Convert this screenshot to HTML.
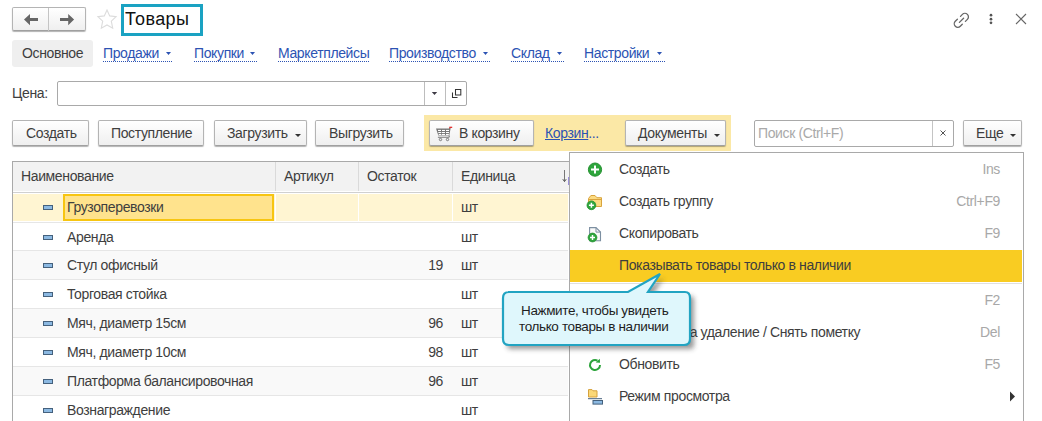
<!DOCTYPE html>
<html><head><meta charset="utf-8">
<style>
*{box-sizing:border-box;margin:0;padding:0}
html,body{width:1042px;height:421px;overflow:hidden;background:#fff}
body{position:relative;font-family:"Liberation Sans",sans-serif;font-size:14px;letter-spacing:-0.37px;color:#3e3e3e}
.a{position:absolute}
.t{position:absolute;white-space:nowrap;line-height:16px}
.btn{position:absolute;height:26px;border:1px solid #b4b4b4;border-bottom-color:#a0a0a0;border-radius:2px;background:linear-gradient(#fff,#efefef);box-shadow:0 1px 1px rgba(0,0,0,.3)}
.btn span{position:absolute;top:4px;white-space:nowrap;line-height:16px}
.lnk{color:#2c53b3}
.dot{background-image:linear-gradient(to right,#2c53b3 50%,transparent 50%);background-size:2px 1px;background-repeat:repeat-x;background-position:0 16px;padding-bottom:1px}
.row{position:absolute;left:13px;width:555px;height:29px;border-bottom:1px solid #e6e6e6}
.row .ic{position:absolute;left:30px;top:12px;width:10px;height:5px;background:#8cb9e2;border:1px solid #45617d}
.row .nm{position:absolute;left:54px;top:6px;white-space:nowrap;line-height:16px}
.row .qt{position:absolute;right:125px;top:6px;line-height:16px}
.row .un{position:absolute;left:448px;top:6px;line-height:16px}
.mi{position:absolute;left:570px;width:452px;height:32px}
.mi .l{position:absolute;left:49px;top:8px;white-space:nowrap;line-height:16px}
.mi .r{position:absolute;right:22px;top:8px;white-space:nowrap;line-height:16px;color:#a8a8a8}
</style></head><body>

<!-- back / forward -->
<div class="btn" style="left:12px;top:7px;width:74px;height:24px"></div>
<div class="a" style="left:48px;top:8px;width:1px;height:23px;background:#c4c4c4"></div>
<svg class="a" style="left:22px;top:12px" width="18" height="14" viewBox="0 0 18 14"><path d="M2 7.4L8 2v4.1h8v2.8H8v4.4z" fill="#666"/></svg>
<svg class="a" style="left:58px;top:12px" width="18" height="14" viewBox="0 0 18 14"><path d="M16.1 7.4L10.2 2v4.1H2v2.8h8.2v4.4z" fill="#666"/></svg>
<!-- star -->
<svg class="a" style="left:96px;top:9px" width="22" height="21" viewBox="0 0 22 21"><path d="M11 1l2.7 5.9 6.4.8-4.8 4.5 1.4 7L11 15.9l-5.7 3.3 1.4-7L1.9 7.7l6.4-.8z" fill="none" stroke="#dcdcdc" stroke-width="1.1"/></svg>
<!-- title -->
<div class="a" style="left:121px;top:4px;width:82px;height:32px;border:3px solid #1aa2c2"></div>
<div class="t" style="left:125px;top:9px;font-size:18px;letter-spacing:0.4px;line-height:20px;color:#111">Товары</div>

<!-- top right icons -->
<svg class="a" style="left:949px;top:9px" width="25" height="23" viewBox="0 0 25 23"><g fill="none" stroke="#666" stroke-width="1.3" stroke-linecap="round"><path d="M11.5 7.4L13.4 5.4A3.5 3.5 0 0 1 18.4 10.4L16.4 12.4"/><path d="M8.4 10.2L6.3 12.2A3.5 3.5 0 0 0 11.3 17.2L13.3 15.2"/><path d="M10.4 13.4L14.6 9.2"/></g></svg>
<svg class="a" style="left:986px;top:10px" width="10" height="18" viewBox="0 0 10 18"><g fill="#555"><circle cx="5" cy="5.2" r="1.35"/><circle cx="5" cy="9.2" r="1.35"/><circle cx="5" cy="12.8" r="1.35"/></g></svg>
<svg class="a" style="left:1014px;top:12px" width="14" height="14" viewBox="0 0 14 14"><path d="M2 2l10 10M12 2L2 12" stroke="#666" stroke-width="1.1"/></svg>

<!-- nav -->
<div class="a" style="left:12px;top:40px;width:81px;height:27px;background:#efefef;border-radius:3px"></div>
<div class="t" style="left:22px;top:45px">Основное</div>
<div class="t lnk dot" style="left:103px;top:45px;width:70px">Продажи</div>
<div class="t lnk dot" style="left:194px;top:45px;width:64px">Покупки</div>
<div class="t lnk dot" style="left:278px;top:45px;width:92px">Маркетплейсы</div>
<div class="t lnk dot" style="left:389px;top:45px;width:102px">Производство</div>
<div class="t lnk dot" style="left:511px;top:45px;width:53px">Склад</div>
<div class="t lnk dot" style="left:584px;top:45px;width:81px">Настройки</div>
<svg class="a" style="left:0;top:0" width="700" height="70"><g fill="#2c53b3"><path d="M166 52h5l-2.5 3z"/><path d="M250 52h5l-2.5 3z"/><path d="M483 52h5l-2.5 3z"/><path d="M557 52h5l-2.5 3z"/><path d="M657 52h5l-2.5 3z"/></g></svg>

<!-- price -->
<div class="t" style="left:12px;top:85px">Цена:</div>
<div class="a" style="left:57px;top:81px;width:410px;height:25px;border:1px solid #a9a9a9;border-radius:2px"></div>
<div class="a" style="left:424px;top:82px;width:1px;height:23px;background:#bdbdbd"></div>
<div class="a" style="left:445px;top:82px;width:1px;height:23px;background:#bdbdbd"></div>
<svg class="a" style="left:430px;top:90px" width="10" height="8"><path d="M1.8 2h5.4L4.5 5z" fill="#3d3a44"/></svg>
<svg class="a" style="left:451px;top:88px" width="12" height="12" viewBox="0 0 12 12"><path d="M4.5 1.5h5.3v5.5H4.5z M1.5 4.5v5h5" fill="none" stroke="#333" stroke-width="1.05"/></svg>

<!-- toolbar -->
<div class="btn" style="left:12px;top:120px;width:77px"><span style="left:13px">Создать</span></div>
<div class="btn" style="left:98px;top:120px;width:106px"><span style="left:12px">Поступление</span></div>
<div class="btn" style="left:214px;top:120px;width:93px"><span style="left:12px">Загрузить</span><svg class="a" style="right:4px;top:12px" width="8" height="6"><path d="M1 1h6l-3 3z" fill="#333"/></svg></div>
<div class="btn" style="left:315px;top:120px;width:89px"><span style="left:13px">Выгрузить</span></div>

<div class="a" style="left:424px;top:115px;width:307px;height:36px;background:#fbe8a6"></div>
<div class="btn" style="left:429px;top:120px;width:105px"><span style="left:29px">В корзину</span></div>
<svg class="a" style="left:430px;top:122px" width="25" height="22" viewBox="0 0 25 22"><path d="M6 6.6h14.6l-1.3 7H8.3z" fill="#777"/><g fill="#fff"><rect x="8" y="7.9" width="3" height="1.1"/><rect x="12" y="7.9" width="3" height="1.1"/><rect x="16" y="7.9" width="3" height="1.1"/><rect x="8.3" y="10" width="3" height="1.1"/><rect x="12" y="10" width="3" height="1.1"/><rect x="16" y="10" width="3" height="1.1"/><rect x="8.7" y="12" width="2.6" height="1.1"/><rect x="12" y="12" width="3" height="1.1"/><rect x="16" y="12" width="2.8" height="1.1"/></g><path d="M7.9 15.2h11.3M19.2 13.4v1.8" stroke="#777" stroke-width="1.1" fill="none"/><circle cx="10.5" cy="17.5" r="1.2" fill="none" stroke="#777" stroke-width="1"/><circle cx="17.5" cy="17.5" r="1.2" fill="none" stroke="#777" stroke-width="1"/><path d="M19.8 7V5.6" stroke="#8a4a3a" stroke-width="1" fill="none"/><path d="M19.3 5.3H22.2" stroke="#e31b1b" stroke-width="1.2" fill="none"/></svg>
<div class="t lnk" style="left:545px;top:125px"><span style="text-decoration:underline">Корзин</span>...</div>
<div class="btn" style="left:625px;top:120px;width:101px"><span style="left:12px">Документы</span><svg class="a" style="right:4px;top:12px" width="8" height="6"><path d="M1 1h6l-3 3z" fill="#333"/></svg></div>

<div class="a" style="left:754px;top:120px;width:200px;height:27px;border:1px solid #a9a9a9;border-radius:2px"></div>
<div class="a" style="left:932px;top:121px;width:1px;height:25px;background:#c4c4c4"></div>
<div class="t" style="left:758px;top:125px;color:#a9a9a9">Поиск (Ctrl+F)</div>
<svg class="a" style="left:938px;top:128px" width="10" height="10"><path d="M2.5 2.5l5 5M7.5 2.5l-5 5" stroke="#555" stroke-width="1"/></svg>
<div class="btn" style="left:963px;top:120px;width:59px;height:26px"><span style="left:12px">Еще</span><svg class="a" style="right:4px;top:12px" width="8" height="6"><path d="M1 1h6l-3 3z" fill="#333"/></svg></div>

<!-- table -->
<div class="a" style="left:12px;top:161px;width:570px;height:270px;border:1px solid #a9a9a9"></div>
<div class="a" style="left:13px;top:162px;width:560px;height:31px;background:#f2f2f2;border-bottom:1px solid #d0d0d0;box-shadow:inset 0 -1px #fff"></div>
<div class="a" style="left:275px;top:162px;width:1px;height:29px;background:#dadada"></div>
<div class="a" style="left:358px;top:162px;width:1px;height:29px;background:#dadada"></div>
<div class="a" style="left:452px;top:162px;width:1px;height:29px;background:#dadada"></div>
<div class="t" style="left:21px;top:168px">Наименование</div>
<div class="t" style="left:284px;top:168px">Артикул</div>
<div class="t" style="left:367px;top:168px">Остаток</div>
<div class="t" style="left:461px;top:168px">Единица</div>
<svg class="a" style="left:558px;top:168px" width="10" height="16"><path d="M6.5 2v11.5" stroke="#777" stroke-width="1"/><path d="M4.8 11.2L6.5 13.6 8.2 11.2" stroke="#555" stroke-width="1" fill="none"/></svg><div class="a" style="left:568px;top:177px;width:1px;height:8px;background:#9a8fd8"></div>

<div class="row" style="top:193px;height:30px;background:#fff5d2;box-shadow:inset 0 1px #fff,inset 0 -1px #fff"><div class="a" style="left:262px;top:0;width:1px;height:29px;background:#fff"></div><div class="a" style="left:345px;top:0;width:1px;height:29px;background:#fff"></div><div class="a" style="left:439px;top:0;width:1px;height:29px;background:#fff"></div><div class="ic"></div><div class="a" style="left:50px;top:1px;width:211px;height:27px;background:#ffe38d;border:2px solid #f7c511"></div><div class="nm">Грузоперевозки</div><div class="un">шт</div></div>
<div class="row" style="top:223px;height:28px"><div class="ic"></div><div class="nm">Аренда</div><div class="un">шт</div></div>
<div class="row" style="top:251px;background:#f9f9f9"><div class="ic"></div><div class="nm">Стул офисный</div><div class="qt">19</div><div class="un">шт</div></div>
<div class="row" style="top:280px"><div class="ic"></div><div class="nm">Торговая стойка</div><div class="un">шт</div></div>
<div class="row" style="top:309px;background:#f9f9f9"><div class="ic"></div><div class="nm">Мяч, диаметр 15см</div><div class="qt">96</div><div class="un">шт</div></div>
<div class="row" style="top:338px"><div class="ic"></div><div class="nm">Мяч, диаметр 10см</div><div class="qt">98</div><div class="un">шт</div></div>
<div class="row" style="top:367px;background:#f9f9f9"><div class="ic"></div><div class="nm">Платформа балансировочная</div><div class="qt">96</div><div class="un">шт</div></div>
<div class="row" style="top:396px"><div class="ic"></div><div class="nm">Вознаграждение</div><div class="un">шт</div></div>

<!-- context menu -->
<div class="a" style="left:569px;top:152px;width:455px;height:280px;background:#fff;border:1px solid #a9a9a9"></div>
<div class="mi" style="top:153px"><div class="l">Создать</div><div class="r">Ins</div></div>
<div class="mi" style="top:185px"><div class="l">Создать группу</div><div class="r">Ctrl+F9</div></div>
<div class="mi" style="top:217px"><div class="l">Скопировать</div><div class="r">F9</div></div>
<div class="mi" style="top:250px;height:32px;background:#f9cc22"><div class="l" style="top:7px">Показывать товары только в наличии</div></div>
<div class="a" style="left:570px;top:283px;width:452px;height:1px;background:#e0e0e0"></div>
<div class="mi" style="top:284px"><div class="l">Изменить</div><div class="r">F2</div></div>
<div class="mi" style="top:316px"><div class="l">Пометить на удаление / Снять пометку</div><div class="r">Del</div></div>
<div class="mi" style="top:348px"><div class="l">Обновить</div><div class="r">F5</div></div>
<div class="mi" style="top:380px"><div class="l">Режим просмотра</div></div>
<svg class="a" style="left:1006px;top:388px" width="12" height="16"><path d="M4 3.5l5 5-5 5z" fill="#333"/></svg>

<!-- menu icons -->
<svg class="a" style="left:580px;top:155px" width="30" height="100" viewBox="0 0 30 100">
 <circle cx="15" cy="14.6" r="6.6" fill="#2ea53c" stroke="#23902f" stroke-width="1"/><path d="M15 10.6v8M11 14.6h8" stroke="#fff" stroke-width="2"/>
 <path d="M8.5 51.5V43.5L10.9 40.5H15L16.9 42.7H21.5V51.5z" fill="#fcdb82" stroke="#d9a43e" stroke-width="1"/><path d="M8.5 44.5h13" stroke="#d9a43e" stroke-width="1"/>
 <circle cx="11.4" cy="50.3" r="4.4" fill="#2ea53c" stroke="#23902f" stroke-width=".8"/><path d="M11.4 47.8v5M8.9 50.3h5" stroke="#fff" stroke-width="1.5"/>
 <path d="M9.6 72.6h6.4l4.5 4.5v8.6H9.6z" fill="#fafafa" stroke="#7c8fa1" stroke-width="1.1"/><path d="M16 72.6v4.5h4.5" fill="none" stroke="#7c8fa1" stroke-width="1"/>
 <circle cx="12.5" cy="82.5" r="4.4" fill="#2ea53c" stroke="#23902f" stroke-width=".8"/><path d="M12.5 80v5M10 82.5h5" stroke="#fff" stroke-width="1.5"/>
</svg>
<svg class="a" style="left:584px;top:354px" width="22" height="22" viewBox="0 0 22 22"><path d="M16 11A5 5 0 1 1 13.5 6.67" fill="none" stroke="#2ba33a" stroke-width="2"/><path d="M11.8 8.6L15.8 4.8 16 8.8z" fill="#2ba33a"/></svg>
<svg class="a" style="left:580px;top:350px" width="30" height="60" viewBox="0 0 30 60">
 <path d="M8.5 47V39.6h3.5l1 1.2h4v6.2z" fill="#fbd878" stroke="#d6a23c" stroke-width="1"/>
 <path d="M8 48.7h14" stroke="#45617d" stroke-width="1"/>
 <rect x="13" y="50.5" width="9.5" height="3.6" fill="#8cb9e2" stroke="#45617d" stroke-width="1"/>
</svg>

<!-- callout -->
<svg class="a" style="left:496px;top:268px" width="220" height="100" viewBox="0 0 220 100"><defs><filter id="bl" x="-20%" y="-20%" width="150%" height="160%"><feGaussianBlur stdDeviation="2.4"/></filter></defs><path d="M11 24 H132 L164 6 L152 24 H190 Q194 24 194 28 V73 Q194 77 190 77 H11 Q7 77 7 73 V28 Q7 24 11 24 Z" fill="#333" opacity=".5" filter="url(#bl)" transform="translate(4,4)"/><path d="M12 24 H132 L164 6 L152 24 H189 Q194 24 194 30 V71 Q194 77 188 77 H13 Q7 77 7 71 V30 Q7 24 13 24 Z" fill="#dff7fc" stroke="#22a4c2" stroke-width="2.2"/></svg>
<div class="t" style="left:521px;top:303px;font-size:13.5px;color:#1e1e1e">Нажмите, чтобы увидеть</div>
<div class="t" style="left:519px;top:319px;font-size:13.5px;color:#1e1e1e">только товары в наличии</div>

</body></html>
